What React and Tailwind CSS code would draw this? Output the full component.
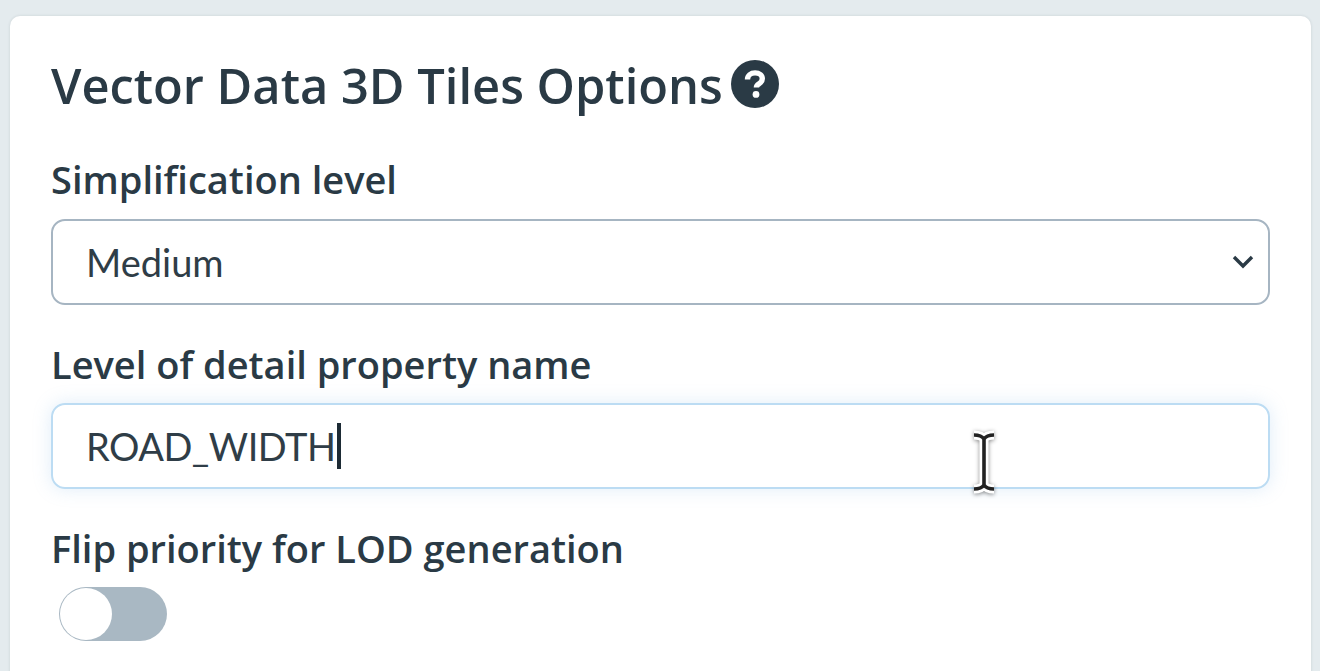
import React from 'react';

export default function App() {
  return (
    <div className="h-[671px] w-[1320px] overflow-hidden bg-[#e4ebee] pl-[10px] pr-[9px] pt-[16px] font-['Open_Sans',sans-serif] text-[#2a3a45]">
      <div className="h-[700px] rounded-t-[10px] bg-white pl-[41px] pr-[41px] pt-[37px] shadow-[0_0_3px_rgba(40,60,70,0.15)]">
        <div className="flex h-[66px] items-start">
          <h1 className="text-[48.8px] font-semibold leading-[64px]">Vector Data 3D Tiles Options</h1>
          <svg className="ml-[8px] mt-[7px] h-[48px] w-[48px]" viewBox="0 0 48 48">
            <circle cx="24" cy="24" r="24" fill="#2a3a45" />
            <path d="M16.5 19.5c0-4 3.2-6.6 7.6-6.6 4.3 0 7.2 2.3 7.2 5.8 0 2.5-1.3 3.8-3.2 5-1.8 1.2-2.7 1.9-2.7 3.7" fill="none" stroke="#fff" strokeWidth="5.4" />
            <circle cx="25" cy="34.4" r="3.4" fill="#fff" />
          </svg>
        </div>

        <label className="mt-[37px] block text-[38px] font-semibold leading-[46px]">Simplification level</label>
        <div className="mt-[17px] flex h-[86px] items-center justify-between rounded-[14px] border-2 border-[#a6b5c2] pl-[33px] pr-[13px]">
          <span className="font-['Lato',sans-serif] text-[38px] text-[#2f3d47]">Medium</span>
          <svg className="h-[18px] w-[24px]" viewBox="0 0 24 18">
            <path d="M3 4l9 9 9-9" fill="none" stroke="#2a3a45" strokeWidth="3.4" />
          </svg>
        </div>

        <label className="mt-[36px] block text-[38px] font-semibold leading-[46px]">Level of detail property name</label>
        <div className="relative mt-[16px] flex h-[86px] items-center rounded-[14px] border-2 border-[#bcdcf3] pl-[33px] shadow-[0_0_18px_rgba(130,185,230,0.25)]">
          <span className="font-['Lato',sans-serif] text-[38px] tracking-[-0.5px] text-[#2f3d47]">ROAD_WIDTH</span>
          <span className="ml-[2px] h-[46px] w-[4px] bg-[#1d2b35]" />
          <svg className="absolute left-[916px] top-[25px] h-[64px] w-[30px] drop-shadow-[0_1px_2px_rgba(0,0,0,0.45)]" viewBox="0 0 30 64">
            <path d="M5 5c5 0 8 1 10 4 2-3 5-4 10-4M15 9v46M5 59c5 0 8-1 10-4 2 3 5 4 10 4" fill="none" stroke="#fff" strokeWidth="9" />
            <path d="M5 5c5 0 8 1 10 4 2-3 5-4 10-4M15 9v46M5 59c5 0 8-1 10-4 2 3 5 4 10 4" fill="none" stroke="#222" strokeWidth="3.6" />
          </svg>
        </div>

        <label className="mt-[36px] block text-[38px] font-semibold leading-[46px]">Flip priority for LOD generation</label>
        <div className="ml-[8px] mt-[16px] flex h-[54px] w-[108px] items-center rounded-full bg-[#a9b8c3] pl-[1px]">
          <span className="h-[52px] w-[52px] rounded-full bg-white" />
        </div>
      </div>
    </div>
  );
}
